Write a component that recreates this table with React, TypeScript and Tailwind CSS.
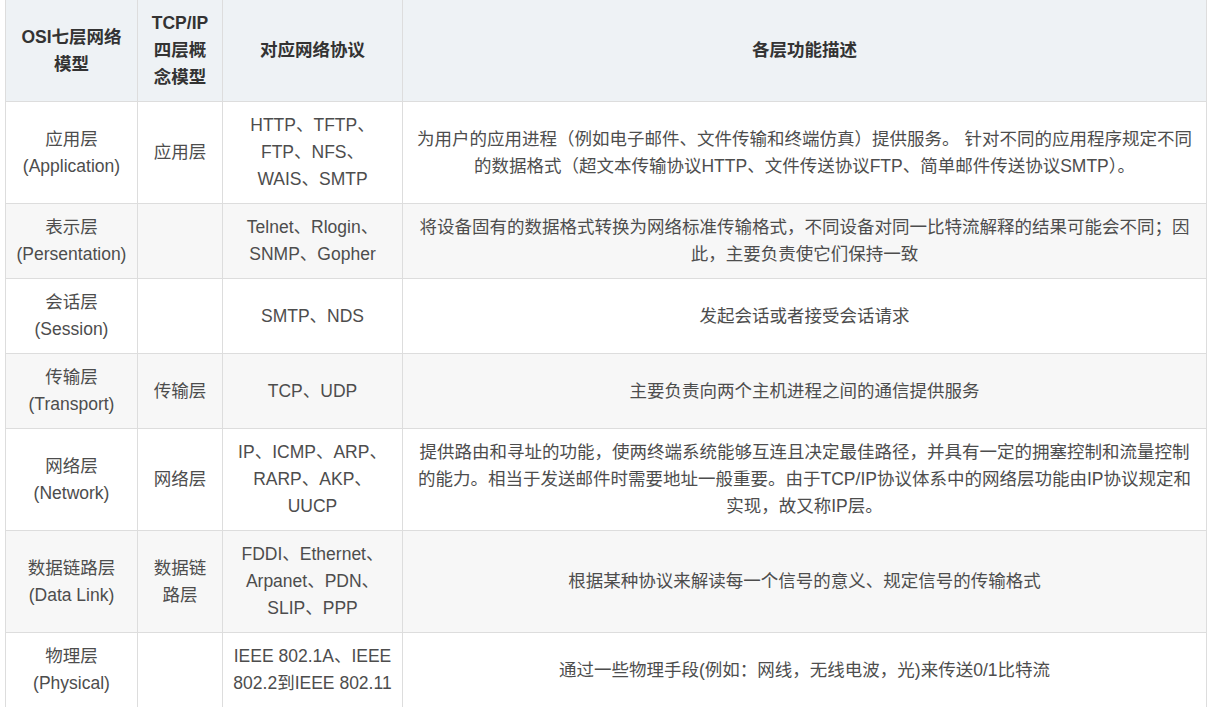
import React from "react";

type Row = { a: string[]; b: string[]; c: string[]; d: string[] };

const rows: Row[] = [
  {
    a: ["应用层", "(Application)"],
    b: ["应用层"],
    c: ["HTTP、TFTP、", "FTP、NFS、", "WAIS、SMTP"],
    d: [
      "为用户的应用进程（例如电子邮件、文件传输和终端仿真）提供服务。 针对不同的应用程序规定不同",
      "的数据格式（超文本传输协议HTTP、文件传送协议FTP、简单邮件传送协议SMTP）。",
    ],
  },
  {
    a: ["表示层", "(Persentation)"],
    b: [],
    c: ["Telnet、Rlogin、", "SNMP、Gopher"],
    d: [
      "将设备固有的数据格式转换为网络标准传输格式，不同设备对同一比特流解释的结果可能会不同；因",
      "此，主要负责使它们保持一致",
    ],
  },
  {
    a: ["会话层", "(Session)"],
    b: [],
    c: ["SMTP、NDS"],
    d: ["发起会话或者接受会话请求"],
  },
  {
    a: ["传输层", "(Transport)"],
    b: ["传输层"],
    c: ["TCP、UDP"],
    d: ["主要负责向两个主机进程之间的通信提供服务"],
  },
  {
    a: ["网络层", "(Network)"],
    b: ["网络层"],
    c: ["IP、ICMP、ARP、", "RARP、AKP、", "UUCP"],
    d: [
      "提供路由和寻址的功能，使两终端系统能够互连且决定最佳路径，并具有一定的拥塞控制和流量控制",
      "的能力。相当于发送邮件时需要地址一般重要。由于TCP/IP协议体系中的网络层功能由IP协议规定和",
      "实现，故又称IP层。",
    ],
  },
  {
    a: ["数据链路层", "(Data Link)"],
    b: ["数据链", "路层"],
    c: ["FDDI、Ethernet、", "Arpanet、PDN、", "SLIP、PPP"],
    d: ["根据某种协议来解读每一个信号的意义、规定信号的传输格式"],
  },
  {
    a: ["物理层", "(Physical)"],
    b: [],
    c: ["IEEE 802.1A、IEEE", "802.2到IEEE 802.11"],
    d: ["通过一些物理手段(例如：网线，无线电波，光)来传送0/1比特流"],
  },
];

function Lines({ lines }: { lines: string[] }) {
  return (
    <>
      {lines.map((l, i) => (
        <div key={i} className="whitespace-nowrap">
          {l}
        </div>
      ))}
    </>
  );
}

const th =
  "border border-[#dddddd] border-t-0 px-[10px] py-[10px] text-center align-middle font-bold text-[#333333] bg-[#eef2f5]";
const td =
  "border border-[#dddddd] px-[10px] py-[10px] text-center align-middle text-[#4d4d4d]";

export default function App() {
  return (
    <div
      className="w-[1210px] h-[707px] overflow-hidden bg-white pl-[5px]"
      style={{}}
    >
      <table
        className="table-fixed border-collapse w-[1201px] text-[17.5px] leading-[27px]"
        style={{ fontFamily: '"Liberation Sans", "Noto Sans CJK SC", sans-serif' }}
      >
        <colgroup>
          <col className="w-[132px]" />
          <col className="w-[85px]" />
          <col className="w-[180px]" />
          <col className="w-[804px]" />
        </colgroup>
        <thead>
          <tr>
            <th className={th}>
              <Lines lines={["OSI七层网络", "模型"]} />
            </th>
            <th className={th}>
              <Lines lines={["TCP/IP", "四层概", "念模型"]} />
            </th>
            <th className={th}>
              <Lines lines={["对应网络协议"]} />
            </th>
            <th className={th}>
              <Lines lines={["各层功能描述"]} />
            </th>
          </tr>
        </thead>
        <tbody>
          {rows.map((r, i) => (
            <tr key={i} className={i % 2 === 1 ? "bg-[#f7f7f7]" : "bg-white"}>
              <td className={td}>
                <Lines lines={r.a} />
              </td>
              <td className={td}>
                <Lines lines={r.b} />
              </td>
              <td className={td}>
                <Lines lines={r.c} />
              </td>
              <td className={td}>
                <Lines lines={r.d} />
              </td>
            </tr>
          ))}
        </tbody>
      </table>
    </div>
  );
}
